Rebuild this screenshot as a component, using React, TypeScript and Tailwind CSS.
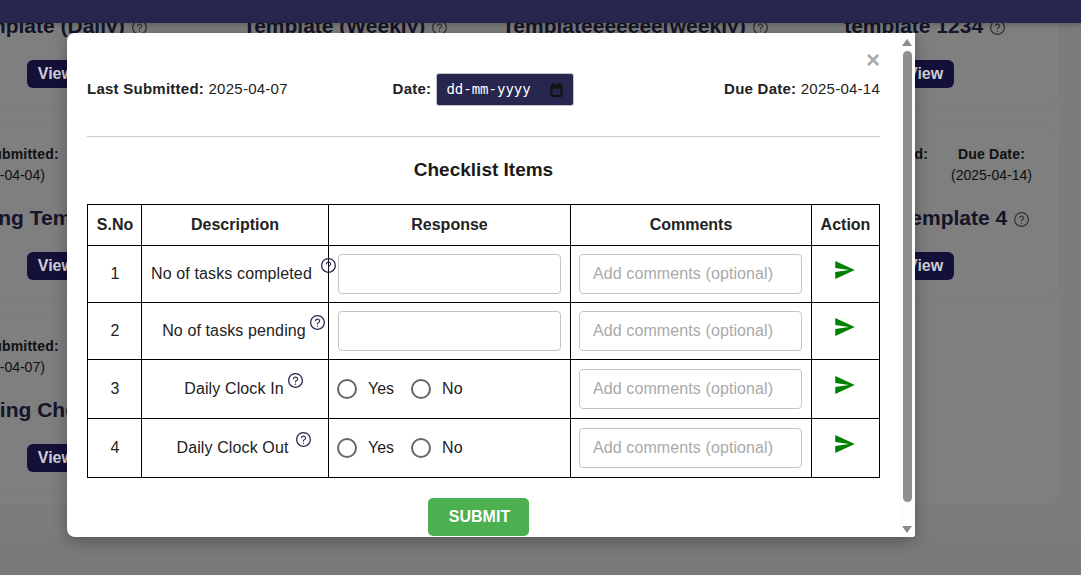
import React from 'react';
import { AiOutlineQuestionCircle } from 'react-icons/ai';
import { IoMdSend } from 'react-icons/io';

type Card = { title: string; submitted: string; due: string };

const CARDS: Card[] = [
  { title: 'Template (Daily)', submitted: '2025-04-07', due: '2025-04-14' },
  { title: 'Template (Weekly)', submitted: '2025-04-07', due: '2025-04-14' },
  { title: 'Templateeeeeee(weekly)', submitted: '2025-04-07', due: '2025-04-14' },
  { title: 'template 1234', submitted: '2025-04-07', due: '2025-04-14' },
  { title: 'Testing Template 1', submitted: '2025-04-04', due: '2025-04-14' },
  { title: 'Testing Template 2', submitted: '2025-04-04', due: '2025-04-14' },
  { title: 'Testing Template 3', submitted: '2025-04-04', due: '2025-04-14' },
  { title: 'Testing Template 4', submitted: '2025-04-04', due: '2025-04-14' },
  { title: 'Testing Checklist', submitted: '2025-04-07', due: '2025-04-14' },
  { title: 'Testing Checklist 2', submitted: '2025-04-07', due: '2025-04-14' },
  { title: 'Testing Checklist 3', submitted: '2025-04-07', due: '2025-04-14' },
];

type Row = {
  no: number;
  text: string;
  iconGap: string;
  kind: 'input' | 'radio';
};

const ROWS: Row[] = [
  { no: 1, text: 'No of tasks completed', iconGap: 'ml-[8px]', kind: 'input' },
  { no: 2, text: 'No of tasks pending', iconGap: 'ml-[3px]', kind: 'input' },
  { no: 3, text: 'Daily Clock In', iconGap: 'ml-[3px]', kind: 'radio' },
  { no: 4, text: 'Daily Clock Out', iconGap: 'ml-[6px]', kind: 'radio' },
];

const TemplateCard = ({ card }: { card: Card }) => (
  <div className="flex h-[168px] flex-col items-center rounded-[16px] bg-[#fefefe] pt-[16px] shadow-[0_2px_8px_rgba(0,0,0,0.03)]">
    <div className="flex gap-[23px] pl-[1px] text-[14px] leading-[20px] text-[#222]">
      <div className="flex flex-col items-center gap-[1px]">
        <span className="font-bold tracking-[0.2px]">Last Submitted:</span>
        <span>({card.submitted})</span>
      </div>
      <div className="flex flex-col items-center gap-[1px]">
        <span className="font-bold tracking-[0.2px]">Due Date:</span>
        <span>({card.due})</span>
      </div>
    </div>
    <div className="mt-[18px] flex h-[30px] items-center gap-[6px] whitespace-nowrap text-[21px] font-bold text-[#2a2a55]">
      {card.title}
      <AiOutlineQuestionCircle className="mt-[3px] h-[17px] w-[17px] text-[#666]" />
    </div>
    <button className="relative z-[15] mt-[19px] h-[28px] w-[58px] rounded-[6px] bg-[#13103a] text-[16px] font-bold text-[#cfcfd6]">
      View
    </button>
  </div>
);

const inputCls =
  'h-[40px] w-full rounded-[4px] border border-[#c4c4c4] bg-white px-[13px] text-[16px] tracking-[0.1px] text-[#222] placeholder:text-[#a9a9a9] outline-none';

const radioCls = 'm-0 h-[20px] w-[20px] appearance-none rounded-full border-2 border-[#666] bg-white';

export default function App() {
  return (
    <div className="relative h-[575px] w-[1081px] overflow-hidden bg-[#f4f5f7] font-['Liberation_Sans',Arial,sans-serif]">
      <div className="relative z-20 h-[23px] bg-[#26264f] shadow-[0_2px_6px_rgba(0,0,0,0.25)]" />

      <div className="h-[514px] overflow-hidden bg-[#f9f9f9]">
        <div className="-ml-[78px] -mt-[87px] grid h-[569px] w-[1137px] grid-cols-4 content-start gap-x-[22px] gap-y-[24px] rounded-b-[16px] bg-[#fefefe]">
          {CARDS.map((card, i) => (
            <TemplateCard key={i} card={card} />
          ))}
        </div>
      </div>

      {/* backdrop */}
      <div className="absolute inset-0 z-10 bg-black/50" />

      {/* modal */}
      <div className="absolute left-[67px] top-[33px] z-30 flex h-[504px] w-[848px] overflow-hidden rounded-[8px] rounded-br-[3px] rounded-tr-none bg-white text-[#222] shadow-[0_4px_16px_rgba(0,0,0,0.3)]">
        <div className="relative min-w-0 flex-1 px-[20px] pt-[40px]">
          <span className="absolute right-[20px] top-[10px] text-[24px] font-bold leading-[34px] text-[#aaa]">×</span>

          <div className="grid h-[33px] grid-cols-3 items-center text-[15px] tracking-[0.25px]">
            <div>
              <b>Last Submitted:</b> 2025-04-07
            </div>
            <div className="flex items-center justify-center gap-[5px]">
              <b>Date:</b>
              <div className="flex h-[33px] w-[138px] items-center justify-between rounded-[3px] border border-[#c4c4c4] bg-[#26264f] pl-[9px] pr-[10px] font-['DejaVu_Sans_Mono',monospace] text-[14px] tracking-normal text-white">
                dd-mm-yyyy
                <svg width="13" height="14" viewBox="0 0 13 14" fill="none" stroke="#111" strokeWidth="2">
                  <rect x="1.5" y="2.5" width="10" height="10.5" rx="1" />
                  <path d="M1 4.5h11M3.5 0v3M9.5 0v3" />
                </svg>
              </div>
            </div>
            <div className="text-right">
              <b>Due Date:</b> 2025-04-14
            </div>
          </div>

          <div className="mt-[30px] h-px bg-[#ccc]" />

          <h2 className="mt-[20px] h-[25px] text-center text-[19px] font-bold leading-[25px] text-[#1a1a1a]">
            Checklist Items
          </h2>

          <table className="mt-[22px] w-[792px] table-fixed border-collapse border border-black text-[16px]">
            <thead>
              <tr className="h-[41px] font-bold">
                <th className="w-[54px] border border-black p-0 pl-[1px]">S.No</th>
                <th className="w-[187px] border border-black p-0">Description</th>
                <th className="w-[242px] border border-black p-0">Response</th>
                <th className="w-[241px] border border-black p-0">Comments</th>
                <th className="w-[68px] border border-black p-0">Action</th>
              </tr>
            </thead>
            <tbody>
              {ROWS.map((row) => (
                <tr key={row.no} className={row.kind === 'input' ? 'h-[57px]' : 'h-[59px]'}>
                  <td className="border border-black p-0 pl-[1px] text-center">{row.no}</td>
                  <td className="border border-black py-0 pl-[18px] pr-0">
                    <div className="flex items-center justify-center whitespace-nowrap tracking-[0.12px]">
                      {row.text}
                      <AiOutlineQuestionCircle
                        className={`mb-[18px] h-[17px] w-[17px] shrink-0 text-[#26264f] ${row.iconGap}`}
                      />
                    </div>
                  </td>
                  <td className="border border-black px-[9px] py-0">
                    {row.kind === 'input' ? (
                      <input className={inputCls} />
                    ) : (
                      <div className="flex items-center">
                        <input type="radio" name={`r${row.no}`} className={`${radioCls} -ml-px`} />
                        <span className="ml-[11px]">Yes</span>
                        <input type="radio" name={`r${row.no}`} className={`${radioCls} ml-[17px]`} />
                        <span className="ml-[11px]">No</span>
                      </div>
                    )}
                  </td>
                  <td className="border border-black py-0 pl-[8px] pr-[9px]">
                    <input className={inputCls} placeholder="Add comments (optional)" />
                  </td>
                  <td className="border border-black p-0">
                    <div className="flex justify-center pb-[8px] pr-[1px]">
                      <IoMdSend className="h-[24px] w-[24px] text-[#008000]" />
                    </div>
                  </td>
                </tr>
              ))}
            </tbody>
          </table>

          <div className="mt-[20px] flex justify-center pr-[10px]">
            <button className="h-[38px] w-[101px] rounded-[5px] bg-[#4caf50] pl-[2px] text-[16px] font-bold text-white">
              SUBMIT
            </button>
          </div>
        </div>

        {/* scrollbar */}
        <div className="flex h-full w-[15px] shrink-0 flex-col items-center bg-[#fdfdfd] pr-[1px]">
          <svg className="mt-[6px] shrink-0" width="10" height="7" viewBox="0 0 10 7">
            <path d="M5 0l5 7H0z" fill="#8a8a8a" />
          </svg>
          <div className="mt-[5px] h-[451px] w-[9px] rounded-full bg-[#8f8f8f]" />
          <svg className="mt-[24px] shrink-0" width="10" height="7" viewBox="0 0 10 7">
            <path d="M5 7l5-7H0z" fill="#8a8a8a" />
          </svg>
        </div>
      </div>
    </div>
  );
}
